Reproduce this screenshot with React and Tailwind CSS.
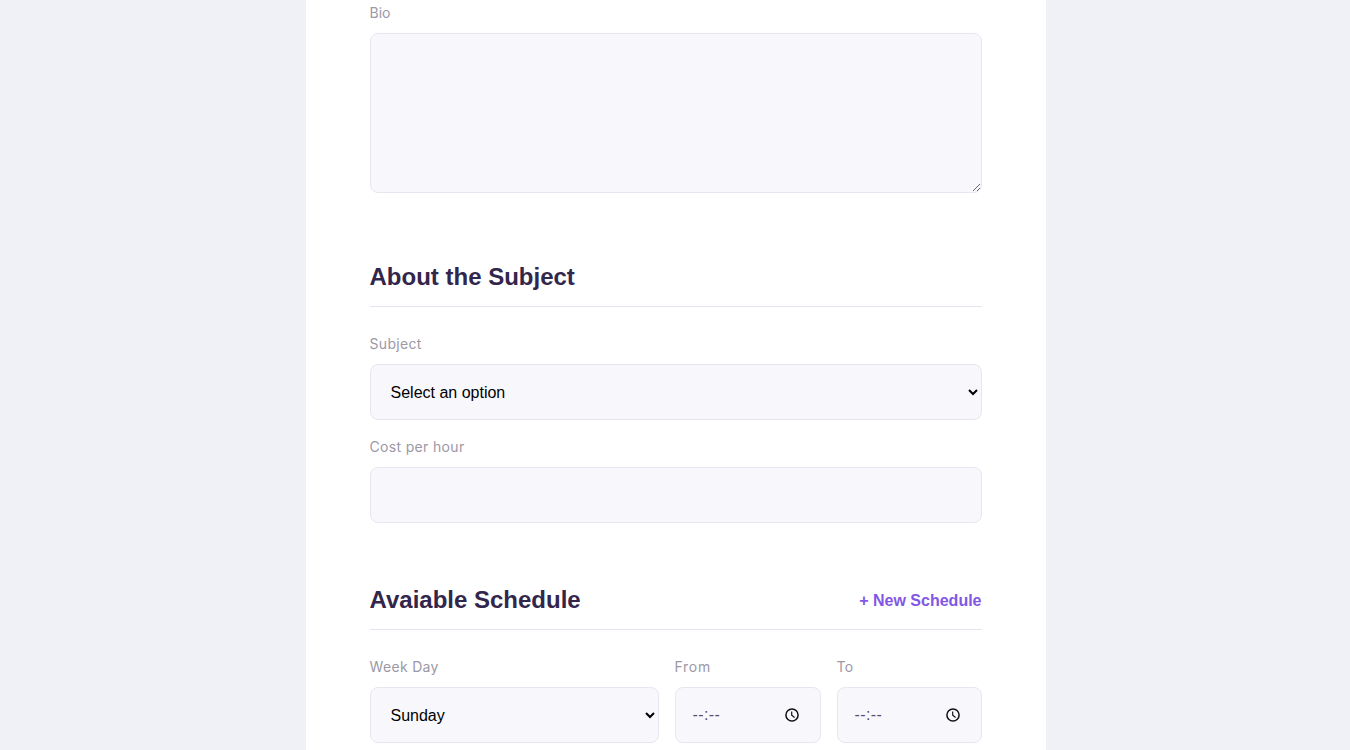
import React from "react";

const control =
  "block w-full rounded-lg border border-[#e6e6f0] bg-[#f8f8fc] text-base text-black outline-none";

function Field({ label, tracking, children }) {
  return (
    <div className="min-w-0">
      <label
        className={`block h-[31px] pt-px text-sm leading-[20px] text-[#9c98a6] font-['Inter',sans-serif] whitespace-nowrap ${tracking}`}
      >
        {label}
      </label>
      {children}
    </div>
  );
}

function SectionTitle({ children, action }) {
  return (
    <div className="flex h-[51px] items-start justify-between border-b border-[#e6e6f0]">
      <h2 className="text-2xl leading-[42px] font-bold text-[#32264d] whitespace-nowrap">
        {children}
      </h2>
      {action}
    </div>
  );
}

function TimeInput() {
  return (
    <div className={`${control} flex h-14 items-center justify-between pl-[17px] pr-[20px]`}>
      <span className="text-[#5a4e74] tracking-[0.4px]">--:--</span>
      <svg width="16" height="16" viewBox="0 0 16 16" fill="none" stroke="#111" strokeWidth="1.5">
        <circle cx="8" cy="8" r="6.1" />
        <path d="M7.7 4.5V8.2L10.6 10.5" strokeWidth="1.2" />
      </svg>
    </div>
  );
}

export default function App() {
  return (
    <div className="h-[750px] overflow-hidden bg-[#f0f0f7] pl-[305.5px] font-['Liberation_Sans',Arial,sans-serif]">
      <main className="h-full w-[740px] bg-white px-16">
        <section className="pt-[2px]">
          <Field label="Bio" tracking="tracking-normal">
            <textarea className={`${control} h-40 resize-y`} />
          </Field>
        </section>

        <section className="pt-[63px]">
          <SectionTitle>About the Subject</SectionTitle>
          <div className="flex flex-col gap-4 pt-[26px]">
            <Field label="Subject" tracking="tracking-[0.33px]">
              <select className={`${control} h-14 pl-4`}>
                <option>Select an option</option>
              </select>
            </Field>
            <Field label="Cost per hour" tracking="tracking-[0.33px]">
              <input className={`${control} h-14 px-4`} />
            </Field>
          </div>
        </section>

        <section className="pt-14">
          <SectionTitle
            action={
              <button className="text-base leading-[43px] font-bold text-[#8257e5] whitespace-nowrap">
                + New Schedule
              </button>
            }
          >
            Avaiable Schedule
          </SectionTitle>
          <div className="grid grid-cols-[289px_146px_145px] gap-4 pt-[26px]">
            <Field label="Week Day" tracking="tracking-[0.33px]">
              <select className={`${control} h-14 pl-4`}>
                <option>Sunday</option>
              </select>
            </Field>
            <Field label="From" tracking="tracking-[0.7px]">
              <TimeInput />
            </Field>
            <Field label="To" tracking="tracking-[0.3px]">
              <TimeInput />
            </Field>
          </div>
        </section>
      </main>
    </div>
  );
}
